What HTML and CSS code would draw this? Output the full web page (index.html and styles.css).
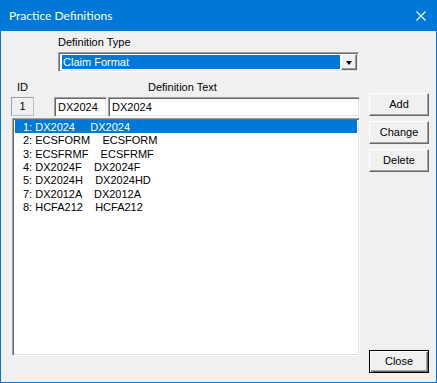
FILE: index.html
```html
<!DOCTYPE html>
<html>
<head>
<meta charset="utf-8">
<link rel="stylesheet" href="styles.css">
</head>
<body>
<div class="window">
  <div class="titlebar">
    <span class="title">Practice Definitions</span>
    <svg class="close-x" width="10" height="10" viewBox="0 0 10 10"><path d="M0.5 0.5L9.5 9.5M9.5 0.5L0.5 9.5" stroke="#fff" stroke-width="1.1"/></svg>
  </div>
  <div class="body">
    <div class="type-block">
      <div class="label">Definition Type</div>
      <div class="combo">
        <div class="combo-value">Claim Format</div>
        <div class="combo-btn"><span class="arrow"></span></div>
      </div>
    </div>
    <div class="main">
      <div class="left">
        <div class="labels">
          <span class="lbl-id">ID</span>
          <span class="lbl-text">Definition Text</span>
        </div>
        <div class="inputs">
          <div class="idbox">1</div>
          <div class="field code">DX2024</div>
          <div class="field text">DX2024</div>
        </div>
        <div class="list">
          <div class="row selected">1: DX2024     DX2024</div>
          <div class="row">2: ECSFORM    ECSFORM</div>
          <div class="row">3: ECSFRMF    ECSFRMF</div>
          <div class="row">4: DX2024F    DX2024F</div>
          <div class="row">5: DX2024H    DX2024HD</div>
          <div class="row">7: DX2012A    DX2012A</div>
          <div class="row">8: HCFA212    HCFA212</div>
        </div>
      </div>
      <div class="buttons">
        <div class="btn">Add</div>
        <div class="btn">Change</div>
        <div class="btn">Delete</div>
        <div class="spacer"></div>
        <div class="btn default">Close</div>
      </div>
    </div>
  </div>
</div>
</body>
</html>
```

FILE: styles.css
```css
* { box-sizing: border-box; }
html, body { margin: 0; padding: 0; }
body {
  width: 437px;
  height: 383px;
  font-family: "Liberation Sans", Arial, sans-serif;
  font-size: 11px;
  color: #000;
  background: #f0f0f0;
}
.window {
  width: 437px;
  height: 383px;
  display: flex;
  flex-direction: column;
  border: 1px solid #0078d7;
  border-top: none;
  background: #f0f0f0;
}
.titlebar {
  height: 31px;
  margin: 0 -1px;
  background: #0078d7;
  display: flex;
  align-items: center;
  justify-content: space-between;
  padding: 0 11px 0 9px;
  flex-shrink: 0;
}
.title {
  color: #fff;
  font-family: Lato, "Noto Sans", sans-serif;
  font-size: 12px;
  padding-bottom: 1px;
}
.close-x { display: block; }
.body {
  flex: 1;
  display: flex;
  flex-direction: column;
  padding: 0 0 9px 0;
}
.type-block {
  padding: 5px 0 0 57px;
}
.label {
  height: 13px;
  line-height: 13px;
  margin-bottom: 3px;
}
.combo {
  width: 301px;
  height: 20px;
  display: flex;
  border-top: 1px solid #a0a0a0;
  border-left: 1px solid #a0a0a0;
  border-right: 1px solid #fff;
  border-bottom: 1px solid #fff;
  box-shadow: inset 1px 1px 0 #696969, inset -1px -1px 0 #e3e3e3;
  background: #fff;
  padding: 2px 2px 2px 3px;
}
.combo-value {
  flex: 1;
  background: #0078d7;
  color: #fff;
  line-height: 14px;
  height: 14px;
  padding-left: 1px;
}
.combo-btn {
  width: 16px;
  margin: -1px -1px -1px 1px;
  background: #f0f0f0;
  border-top: 1px solid #fff;
  border-left: 1px solid #fff;
  border-right: 1px solid #696969;
  border-bottom: 1px solid #696969;
  box-shadow: inset -1px -1px 0 #a0a0a0;
  display: flex;
  align-items: center;
  justify-content: center;
}
.arrow {
  width: 0;
  height: 0;
  border-left: 3.5px solid transparent;
  border-right: 3.5px solid transparent;
  border-top: 4px solid #000;
  margin-top: 1px;
}
.main {
  flex: 1;
  display: flex;
  padding: 9px 7px 0 10px;
}
.left {
  width: 349px;
  display: flex;
  flex-direction: column;
}
.labels {
  height: 13px;
  line-height: 13px;
  display: flex;
  margin-bottom: 3px;
}
.lbl-id { margin-left: 6px; }
.lbl-text { margin-left: 120px; }
.inputs {
  display: flex;
  height: 20px;
  margin-bottom: 1px;
}
.idbox {
  width: 23px;
  height: 19px;
  margin-right: 20px;
  border: 1px solid #a0a0a0;
  border-right-color: #c0c0c0;
  border-bottom-color: #c0c0c0;
  text-align: center;
  line-height: 17px;
  background: #f0f0f0;
}
.field {
  height: 20px;
  background: #fff;
  border-top: 1px solid #a0a0a0;
  border-left: 1px solid #a0a0a0;
  border-right: 1px solid #fff;
  border-bottom: 1px solid #fff;
  box-shadow: inset 1px 1px 0 #696969, inset -1px -1px 0 #e3e3e3;
  padding: 2px 0 0 3px;
  line-height: 15px;
}
.field.code { width: 53px; margin-right: 1px; }
.field.text { width: 252px; }
.list {
  flex: 1;
  background: #fff;
  margin-left: 1px;
  border-top: 1px solid #a0a0a0;
  border-left: 1px solid #a0a0a0;
  border-right: 1px solid #fff;
  border-bottom: 1px solid #fff;
  box-shadow: inset 1px 1px 0 #696969, inset -1px -1px 0 #e3e3e3;
  padding: 1px 2px 2px 2px;
  margin-bottom: 17px;
}
.row {
  white-space: pre;
  height: 13.33px;
  line-height: 14px;
  padding-left: 8px;
}
.row.selected {
  background: #0078d7;
  color: #fff;
}
.buttons {
  flex: 1;
  display: flex;
  flex-direction: column;
  align-items: flex-end;
  padding-top: 12px;
}
.btn {
  width: 60px;
  height: 23px;
  margin-bottom: 5px;
  background: #f0f0f0;
  border-top: 1px solid #fff;
  border-left: 1px solid #fff;
  border-right: 1px solid #696969;
  border-bottom: 1px solid #696969;
  box-shadow: inset -1px -1px 0 #a0a0a0;
  text-align: center;
  line-height: 20px;
}
.spacer { flex: 1; }
.btn.default {
  margin-bottom: 0;
  border: 1px solid #000;
  box-shadow: inset 1px 1px 0 #fff, inset -1px -1px 0 #696969, inset -2px -2px 0 #a0a0a0;
}
```
